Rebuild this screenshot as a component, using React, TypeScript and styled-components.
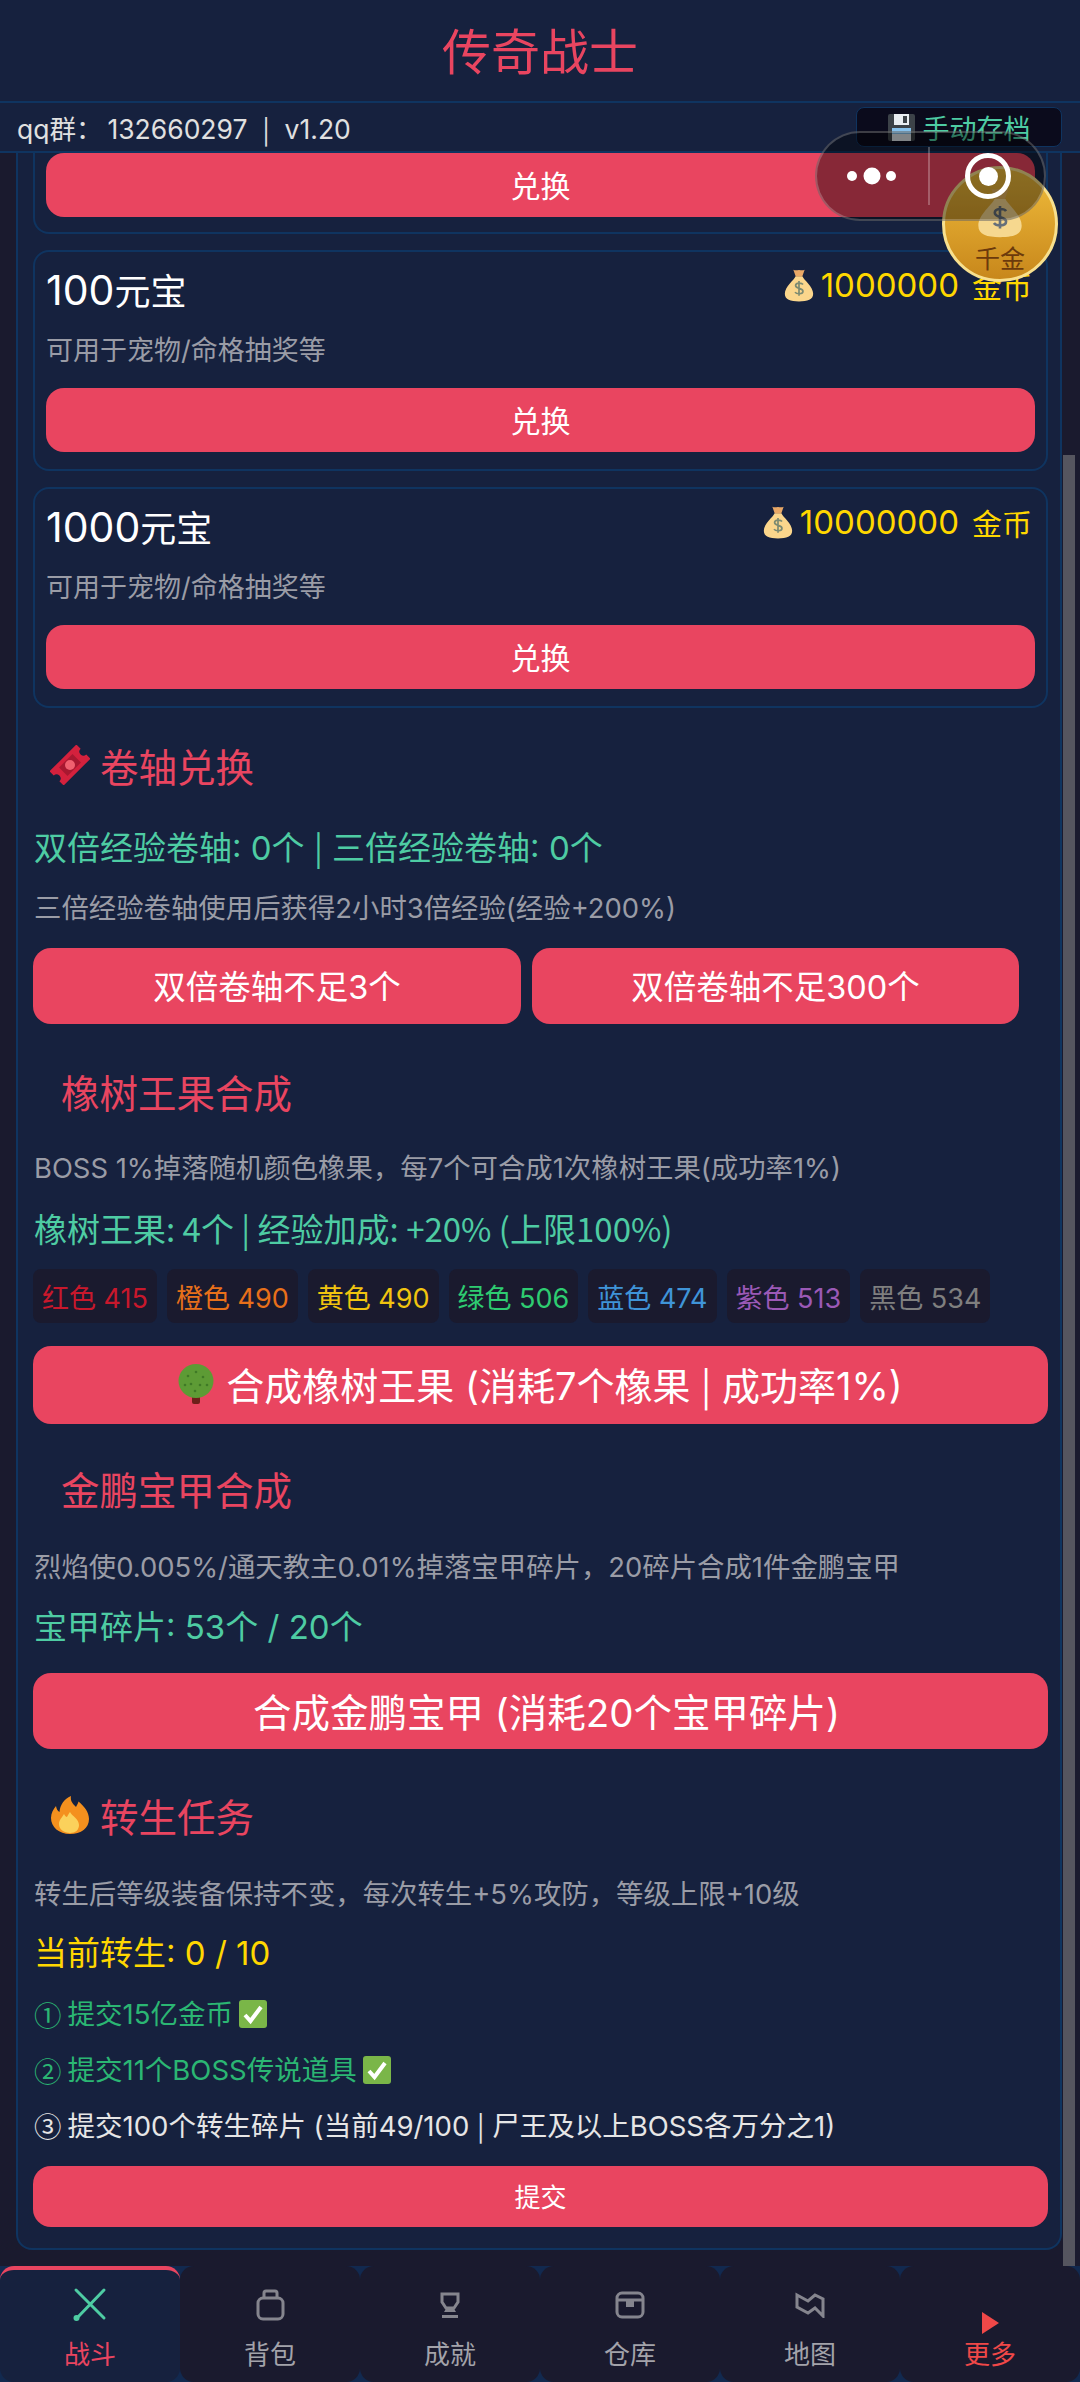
import React from "react";
import styled, { createGlobalStyle } from "styled-components";

const RED = "#e94560";
const TEAL = "#4ecca3";
const NAVY = "#16213e";
const DARK = "#1a1a2e";
const LINE = "#0f3460";
const CJK = `"Noto Sans CJK SC", "Noto Sans", sans-serif`;

const GlobalStyle = createGlobalStyle`
  html, body {
    margin: 0;
    padding: 0;
    background: ${DARK};
  }
  * {
    box-sizing: border-box;
  }
  body {
    font-family: Inter, ${CJK};
    color: #e0e0e0;
  }
`;

const Page = styled.div`
  position: relative;
  width: 1080px;
  height: 2382px;
  display: flex;
  flex-direction: column;
  overflow: hidden;
  background: ${DARK};
`;

const Header = styled.header`
  height: 103px;
  flex: none;
  display: flex;
  align-items: center;
  justify-content: center;
  padding-bottom: 4px;
  background: ${NAVY};
  border-bottom: 2px solid ${LINE};
  color: ${RED};
  font-size: 49px;
`;

const SubBar = styled.div`
  height: 50px;
  flex: none;
  display: flex;
  align-items: center;
  justify-content: space-between;
  padding: 0 18px 0 17px;
  background: ${NAVY};
  border-bottom: 2px solid ${LINE};
  font-size: 26.500px;
`;

const GroupNumber = styled.span`
  margin-left: 5px;
`;

const Pipe = styled.span<{ $gap?: number }>`
  font-family: ${CJK};
  margin: 0 ${(p) => p.$gap ?? 0}px;
`;

const SaveButton = styled.div`
  width: 206px;
  height: 40px;
  display: flex;
  align-items: center;
  justify-content: center;
  gap: 8px;
  background: #0b0b1c;
  border: 1px solid ${LINE};
  border-radius: 8px;
  color: ${TEAL};
  font-size: 27px;
`;

const Content = styled.main`
  position: relative;
  flex: 1;
  min-height: 0;
  overflow: hidden;
  padding: 0 18px 0 16px;
`;

const ScrollThumb = styled.div`
  position: absolute;
  top: 302px;
  right: 5px;
  bottom: 0;
  width: 12px;
  background: #55555f;
`;

const Panel = styled.div`
  background: ${NAVY};
  border: 2px solid ${LINE};
  border-top: none;
  border-radius: 0 0 16px 16px;
  padding: 0 12px 21px 15px;
`;

const Card = styled.div<{ $cut?: boolean }>`
  height: ${(p) => (p.$cut ? "81px" : "221px")};
  margin-top: ${(p) => (p.$cut ? "0" : "16px")};
  padding: ${(p) => (p.$cut ? "0 11px" : "18px 11px 0")};
  border: 2px solid ${LINE};
  border-top-width: ${(p) => (p.$cut ? "0" : "2px")};
  border-radius: ${(p) => (p.$cut ? "0 0 16px 16px" : "16px")};
`;

const CardTop = styled.div`
  display: flex;
  justify-content: space-between;
  align-items: flex-start;
  height: 46px;
`;

const CardName = styled.div`
  margin-top: -3px;
  font-size: 36px;
  line-height: 46px;
  color: #fff;
`;

const NameDigits = styled.span`
  font-size: 41px;
`;

const Price = styled.div`
  display: flex;
  align-items: center;
  gap: 5px;
  height: 40px;
  margin: -5px 3px 0 0;
  color: #ffd700;
  font-size: 30px;
`;

const PriceDigits = styled.span`
  font-size: 33px;
  margin-right: 8px;
`;

const CardDesc = styled.div`
  margin-top: 16px;
  font-size: 27px;
  line-height: 38px;
  color: #9a9ca6;
`;

const Button = styled.button<{ $h: number; $size: number; $top?: number; $wide?: boolean; $indent?: number }>`
  display: flex;
  align-items: center;
  justify-content: center;
  gap: 12px;
  width: ${(p) => (p.$wide ? "100%" : "auto")};
  height: ${(p) => p.$h}px;
  margin-top: ${(p) => p.$top ?? 0}px;
  padding: 0 0 3px ${(p) => p.$indent ?? 0}px;
  border: none;
  border-radius: 18px;
  background: ${RED};
  color: #fff;
  font-family: inherit;
  font-size: ${(p) => p.$size}px;
  white-space: pre;
`;

const SectionTitle = styled.h2<{ $top: number; $plain?: boolean }>`
  display: flex;
  align-items: center;
  gap: 10px;
  height: 50px;
  margin: ${(p) => p.$top}px 0 0;
  padding-left: ${(p) => (p.$plain ? "28px" : "17px")};
  padding-bottom: 8px;
  color: ${RED};
  font-size: 38.500px;
  font-weight: 400;
`;

const Stat = styled.div<{ $top: number; $gold?: boolean; $cjk?: boolean }>`
  margin-top: ${(p) => p.$top}px;
  padding-left: 1px;
  font-family: ${(p) => (p.$cjk ? CJK : "inherit")};
  font-size: 33px;
  line-height: 44px;
  color: ${(p) => (p.$gold ? "#ffd700" : TEAL)};
`;

const Note = styled.div<{ $top: number }>`
  margin-top: ${(p) => p.$top}px;
  padding-left: 1px;
  font-size: 27.400px;
  line-height: 40px;
  color: #9a9ca6;
`;

const ButtonRow = styled.div`
  display: grid;
  grid-template-columns: 488px 487px;
  gap: 11px;
  margin-top: 20px;
`;

const TagRow = styled.div`
  display: flex;
  gap: 10px;
  margin-top: 19px;
`;

const Tag = styled.span<{ $color: string }>`
  height: 54px;
  display: flex;
  align-items: center;
  padding: 0 9px;
  border-radius: 8px;
  background: ${DARK};
  color: ${(p) => p.$color};
  font-size: 27px;
  white-space: nowrap;
`;

const Step = styled.div<{ $top: number; $done?: boolean }>`
  display: flex;
  align-items: center;
  gap: 6px;
  margin-top: ${(p) => p.$top}px;
  padding-left: 1px;
  font-size: 27.500px;
  line-height: 40px;
  white-space: pre;
  color: ${(p) => (p.$done ? "#2bb673" : "#e6e6e6")};
`;

const StepMark = styled.span`
  font-family: ${CJK};
`;

const Nav = styled.nav`
  height: 116px;
  flex: none;
  display: grid;
  grid-template-columns: repeat(6, 1fr);
  background: #12294f;
`;

const NavItem = styled.div<{ $active?: boolean; $tone?: string }>`
  display: flex;
  flex-direction: column;
  align-items: center;
  padding-top: ${(p) => (p.$active ? "7px" : "11px")};
  border-radius: 14px;
  border-top: ${(p) => (p.$active ? `4px solid ${RED}` : "none")};
  background: ${(p) => (p.$active ? NAVY : DARK)};
  color: ${(p) => p.$tone ?? "#a3a3aa"};
  font-size: 26px;
`;

const NavIcon = styled.div`
  height: 56px;
  width: 100%;
  display: flex;
  align-items: center;
  justify-content: center;
`;

const NavLabel = styled.div`
  line-height: 36px;
  height: 36px;
  margin-top: 4px;
`;

const Capsule = styled.div`
  position: absolute;
  top: 131px;
  left: 815px;
  width: 231px;
  height: 90px;
  border-radius: 45px;
  border: 2px solid rgba(255, 255, 255, 0.22);
  background: rgba(0, 0, 0, 0.42);
  z-index: 3;
`;

const CapsuleDivider = styled.div`
  position: absolute;
  left: 111px;
  top: 14px;
  width: 2px;
  height: 58px;
  background: rgba(255, 255, 255, 0.25);
`;

const CapsuleDots = styled.svg`
  position: absolute;
  left: 27px;
  top: 28px;
`;

const CapsuleRing = styled.div`
  position: absolute;
  left: 148px;
  top: 20px;
  width: 46px;
  height: 46px;
  display: flex;
  align-items: center;
  justify-content: center;
  border: 5px solid #fff;
  border-radius: 50%;
  &::after {
    content: "";
    width: 19px;
    height: 19px;
    border-radius: 50%;
    background: #fff;
  }
`;

const Coin = styled.div`
  position: absolute;
  top: 166px;
  left: 942px;
  width: 116px;
  height: 116px;
  display: flex;
  flex-direction: column;
  align-items: center;
  padding-top: 17px;
  border-radius: 50%;
  border: 3px solid #f8e08e;
  background: linear-gradient(180deg, #f0bd3c 0%, #c8871b 100%);
  color: #6b3a0c;
  font-size: 25px;
  line-height: 30px;
  z-index: 2;
`;

const CoinLabel = styled.div`
  margin-top: 6px;
`;

const BagIcon = ({ size, faded }: { size: number; faded?: boolean }) => (
  <svg width={size} height={size} viewBox="3 1 26 30" style={{ flex: "none" }}>
    <path
      d="M11 2.5c2 1 3 .3 5 .3s3 .7 5-.3l-2.2 6.2h-5.6z"
      fill={faded ? "#e7b65e" : "#e9a866"}
    />
    <path
      d="M12.8 8.5h6.4c1 3 9.3 9 9.3 15.3 0 5.4-5 6.7-12.5 6.7S3.500 29.200 3.500 23.800C3.500 17.500 11.800 11.500 12.800 8.500z"
      fill={faded ? "#f6d88f" : "#fbd68c"}
    />
    <path
      d="M19.500 15.500c-1-1.500-6.500-2-6.500 1 0 3.200 6.500 1.800 6.500 5 0 3-5.800 2.600-7 .8M16 12.500v13"
      fill="none"
      stroke={faded ? "#66707a" : "#7d8b72"}
      strokeWidth="1.500"
    />
  </svg>
);

const FloppyIcon = () => (
  <svg width="27" height="27" viewBox="0 0 27 27" style={{ flex: "none" }}>
    <rect x="0" y="0" width="27" height="27" rx="2" fill="#3c4248" />
    <rect x="6" y="0" width="15" height="11" fill="#e9eef2" />
    <rect x="15" y="2" width="4" height="7" fill="#3c4248" />
    <rect x="4" y="14" width="19" height="13" fill="#dde3e8" />
    <rect x="4" y="14" width="19" height="6" fill="#86c1ec" />
  </svg>
);

const TicketIcon = () => (
  <svg width="40" height="40" viewBox="0 0 40 40" style={{ flex: "none" }}>
    <g transform="rotate(-45 20 20)">
      <path
        d="M1 10h38v6a4 4 0 0 0 0 8v6H1v-6a4 4 0 0 0 0-8z"
        fill="#d4213d"
      />
      <path d="M10.500 14h19v12h-19z" fill="#a81830" />
      <circle cx="20" cy="20" r="5" fill="#f0606f" />
    </g>
  </svg>
);

const FireIcon = () => (
  <svg width="40" height="40" viewBox="0 0 40 40" style={{ flex: "none" }}>
    <path
      d="M20 39C9 39 1 32 1 23c0-5 2.500-9 5-12 .500 3 1.500 5 3.500 6C10 10 14 4 21 1c-1 5 2 8 5 11 1-2 2-3.500 2.500-5.500C34 11 39 17 39 24c0 9-8 15-19 15z"
      fill="#f4901e"
    />
    <path
      d="M20 38c-6 0-11-3.500-11-9 0-4 3-6.500 5-10 1 2 2 3 3 3 1-2 2-4 3-5 2 4 9 7 9 13 0 5-3.500 8-9 8z"
      fill="#fbd15b"
    />
  </svg>
);

const TreeIcon = () => (
  <svg width="36" height="40" viewBox="0 0 36 40" style={{ flex: "none" }}>
    <rect x="14" y="30" width="8" height="10" rx="2" fill="#6e1f1a" />
    <ellipse cx="18" cy="17" rx="17.500" ry="17" fill="#5d9b35" />
    <g fill="#3f7a26">
      <circle cx="10" cy="12" r="1.300" />
      <circle cx="18" cy="8" r="1.300" />
      <circle cx="25" cy="13" r="1.300" />
      <circle cx="13" cy="20" r="1.300" />
      <circle cx="22" cy="21" r="1.300" />
      <circle cx="7" cy="21" r="1.300" />
      <circle cx="29" cy="21" r="1.300" />
      <circle cx="17" cy="27" r="1.300" />
    </g>
  </svg>
);

const CheckIcon = () => (
  <svg width="28" height="28" viewBox="0 0 28 28" style={{ flex: "none" }}>
    <rect width="28" height="28" rx="3" fill="#7ab648" />
    <path d="M6 15l5.500 6L22 7" fill="none" stroke="#fff" strokeWidth="4" />
  </svg>
);

const gray = { fill: "none", stroke: "#85858e", strokeWidth: 3 };

const SwordIcon = () => (
  <svg width="36" height="36" viewBox="0 0 36 36">
    <path d="M4 3l28 28M32 3L5 31" fill="none" stroke={TEAL} strokeWidth="3" strokeLinecap="round" />
    <circle cx="4.500" cy="31" r="3" fill={TEAL} />
  </svg>
);

const PackIcon = () => (
  <svg width="30" height="32" viewBox="0 0 30 32">
    <rect x="3" y="9" width="25" height="21" rx="5" {...gray} />
    <path d="M9 9V4a2 2 0 0 1 2-2h9a2 2 0 0 1 2 2v5" {...gray} />
  </svg>
);

const CupIcon = () => (
  <svg width="22" height="26" viewBox="0 0 22 26">
    <path d="M3 2h16v8l-4 6H7l-4-6z" {...gray} />
    <path d="M8 15h6l3 5H5z" fill="#85858e" />
    <path d="M3 24.500h16" {...gray} />
  </svg>
);

const StoreIcon = () => (
  <svg width="30" height="28" viewBox="0 0 30 28">
    <rect x="2" y="2" width="26" height="24" rx="5" {...gray} />
    <path d="M2 9h26" {...gray} />
    <path d="M11 9h8v7h-8z" fill="#85858e" />
  </svg>
);

const MapIcon = () => (
  <svg width="30" height="26" viewBox="0 0 30 26">
    <path d="M2 3l11 6 7-6 8 4v17l-8-8-7 5L2 15z" {...gray} />
  </svg>
);

const PlayIcon = () => (
  <svg width="18" height="22" viewBox="0 0 18 22" style={{ marginTop: 35 }}>
    <path d="M1 0l17 11L1 22z" fill="#f04848" />
  </svg>
);

const tags = [
  { color: "#c8182c", label: "红色 415" },
  { color: "#e8701a", label: "橙色 490" },
  { color: "#f1c40f", label: "黄色 490" },
  { color: "#2ecc71", label: "绿色 506" },
  { color: "#3f94d8", label: "蓝色 474" },
  { color: "#9b59b6", label: "紫色 513" },
  { color: "#7f7f7f", label: "黑色 534" },
];

const navItems = [
  { label: "背包", icon: <PackIcon /> },
  { label: "成就", icon: <CupIcon /> },
  { label: "仓库", icon: <StoreIcon /> },
  { label: "地图", icon: <MapIcon /> },
];

const App: React.FC = () => (
  <Page>
    <GlobalStyle />
    <Header>传奇战士</Header>
    <SubBar>
      <span>
        qq群：<GroupNumber>132660297</GroupNumber>
        <Pipe $gap={15}>|</Pipe>v1.20
      </span>
      <SaveButton>
        <FloppyIcon />
        手动存档
      </SaveButton>
    </SubBar>

    <Content>
      <Panel>
        <Card $cut>
          <Button $h={64} $size={30} $wide>
            兑换
          </Button>
        </Card>
        <Card>
          <CardTop>
            <CardName>
              <NameDigits>100</NameDigits>元宝
            </CardName>
            <Price>
              <BagIcon size={34} />
              <PriceDigits>1000000</PriceDigits>金币
            </Price>
          </CardTop>
          <CardDesc>可用于宠物/命格抽奖等</CardDesc>
          <Button $h={64} $size={30} $top={18} $wide>
            兑换
          </Button>
        </Card>
        <Card>
          <CardTop>
            <CardName>
              <NameDigits>1000</NameDigits>元宝
            </CardName>
            <Price>
              <BagIcon size={34} />
              <PriceDigits>10000000</PriceDigits>金币
            </Price>
          </CardTop>
          <CardDesc>可用于宠物/命格抽奖等</CardDesc>
          <Button $h={64} $size={30} $top={18} $wide>
            兑换
          </Button>
        </Card>

        <SectionTitle $top={36}>
          <TicketIcon />
          卷轴兑换
        </SectionTitle>
        <Stat $top={30}>
          双倍经验卷轴: 0个 <Pipe>|</Pipe> 三倍经验卷轴: 0个
        </Stat>
        <Note $top={18}>三倍经验卷轴使用后获得2小时3倍经验(经验+200%)</Note>
        <ButtonRow>
          <Button $h={76} $size={32.5}>
            双倍卷轴不足3个
          </Button>
          <Button $h={76} $size={32.5}>
            双倍卷轴不足300个
          </Button>
        </ButtonRow>

        <SectionTitle $top={46} $plain>
          橡树王果合成
        </SectionTitle>
        <Note $top={28}>BOSS 1%掉落随机颜色橡果，每7个可合成1次橡树王果(成功率1%)</Note>
        <Stat $top={18} $cjk>
          橡树王果: 4个 | 经验加成: +20% (上限100%)
        </Stat>
        <TagRow>
          {tags.map((tag) => (
            <Tag key={tag.label} $color={tag.color}>
              {tag.label}
            </Tag>
          ))}
        </TagRow>
        <Button $h={78} $size={38} $top={23} $wide>
          <TreeIcon />
          <span>
            合成橡树王果 (消耗7个橡果 <Pipe>|</Pipe> 成功率1%)
          </span>
        </Button>

        <SectionTitle $top={43} $plain>
          金鹏宝甲合成
        </SectionTitle>
        <Note $top={30}>烈焰使0.005%/通天教主0.01%掉落宝甲碎片，20碎片合成1件金鹏宝甲</Note>
        <Stat $top={18}>宝甲碎片: 53个 / 20个</Stat>
        <Button $h={76} $size={38.5} $top={24} $wide $indent={12}>
          合成金鹏宝甲 (消耗20个宝甲碎片)
        </Button>

        <SectionTitle $top={45}>
          <FireIcon />
          转生任务
        </SectionTitle>
        <Note $top={30}>转生后等级装备保持不变，每次转生+5%攻防，等级上限+10级</Note>
        <Stat $top={17} $gold>
          当前转生: 0 / 10
        </Stat>
        <Step $top={19} $done>
          <StepMark>①</StepMark>提交15亿金币
          <CheckIcon />
        </Step>
        <Step $top={16} $done>
          <StepMark>②</StepMark>提交11个BOSS传说道具
          <CheckIcon />
        </Step>
        <Step $top={14}>
          <StepMark>③</StepMark>
          <span>
            提交100个转生碎片 (当前49/100 <Pipe>|</Pipe> 尸王及以上BOSS各万分之1)
          </span>
        </Step>
        <Button $h={61} $size={26} $top={20} $wide>
          提交
        </Button>
      </Panel>
      <ScrollThumb />
    </Content>

    <Nav>
      <NavItem $active $tone={RED}>
        <NavIcon>
          <SwordIcon />
        </NavIcon>
        <NavLabel>战斗</NavLabel>
      </NavItem>
      {navItems.map((item) => (
        <NavItem key={item.label}>
          <NavIcon>{item.icon}</NavIcon>
          <NavLabel>{item.label}</NavLabel>
        </NavItem>
      ))}
      <NavItem $tone="#f04848">
        <NavIcon>
          <PlayIcon />
        </NavIcon>
        <NavLabel>更多</NavLabel>
      </NavItem>
    </Nav>

    <Coin>
      <BagIcon size={52} faded />
      <CoinLabel>千金</CoinLabel>
    </Coin>
    <Capsule>
      <CapsuleDots width="66" height="30" viewBox="0 0 66 30">
        <circle cx="8" cy="15" r="5" fill="#fff" />
        <circle cx="28" cy="15" r="8.500" fill="#fff" />
        <circle cx="47" cy="15" r="5" fill="#fff" />
      </CapsuleDots>
      <CapsuleDivider />
      <CapsuleRing />
    </Capsule>
  </Page>
);

export default App;
